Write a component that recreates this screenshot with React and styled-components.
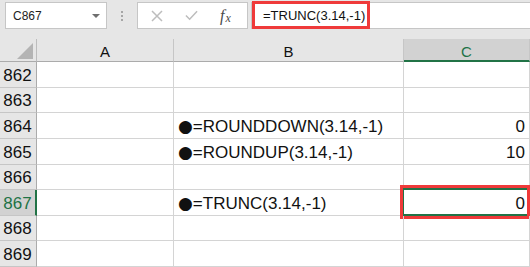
import React from 'react';
import styled, { createGlobalStyle } from 'styled-components';

const Global = createGlobalStyle`
  html, body { margin: 0; padding: 0; background: #fff; }
  body { font-family: "Liberation Sans", "DejaVu Sans", Arial, sans-serif; }
`;

const GREEN = '#217346';
const RED = '#ef3a3a';

const Page = styled.div`
  width: 530px;
  height: 267px;
  overflow: hidden;
  background: #fff;
`;

const Toolbar = styled.div`
  height: 39px;
  box-sizing: border-box;
  padding-top: 2px;
  background: #e6e6e6;
  display: flex;
  align-items: flex-start;
`;

const NameBox = styled.div`
  margin-left: 5px;
  width: 102px;
  height: 27px;
  box-sizing: border-box;
  background: #fff;
  border: 1px solid #c6c6c6;
  display: flex;
  align-items: center;
  justify-content: space-between;
  padding: 0 6px 0 7px;
  font-size: 12px;
  color: #222;
`;

const Caret = styled.span`
  width: 0;
  height: 0;
  border-left: 4px solid transparent;
  border-right: 4px solid transparent;
  border-top: 4px solid #6f6f6f;
`;

const Grip = styled.div`
  width: 30px;
  height: 27px;
  display: flex;
  flex-direction: column;
  align-items: center;
  justify-content: center;
  gap: 2px;
  & > span {
    width: 2px;
    height: 2px;
    background: #a6a6a6;
  }
`;

const ButtonsBox = styled.div`
  width: 111px;
  height: 27px;
  box-sizing: border-box;
  background: #fff;
  border: 1px solid #c6c6c6;
  display: flex;
  align-items: center;
  padding-left: 12px;
  gap: 22px;
`;

const IconBtn = styled.span`
  display: flex;
  align-items: center;
  justify-content: center;
  width: 13px;
  height: 13px;
`;

const Fx = styled.span`
  font-family: "Liberation Serif", "DejaVu Serif", serif;
  font-style: italic;
  font-size: 16px;
  color: #4a4a4a;
  display: flex;
  align-items: baseline;
  & > sub {
    font-size: 12px;
    vertical-align: baseline;
    position: relative;
    top: 1px;
    margin-left: 1px;
  }
`;

const FormulaBox = styled.div`
  position: relative;
  flex: 1;
  margin-left: 3px;
  height: 27px;
  box-sizing: border-box;
  background: #fff;
  border: 1px solid #c6c6c6;
  border-right: none;
  display: flex;
  align-items: center;
  padding-left: 11px;
  font-size: 13px;
  color: #111;
`;

const Highlight = styled.div`
  position: absolute;
  box-sizing: border-box;
  border: 3px solid ${RED};
  pointer-events: none;
`;

const SheetRow = styled.div`
  display: grid;
  grid-template-columns: 37px 137px 230px 1fr;
  height: ${p => p.$h}px;
`;

const Corner = styled.div`
  background: #e6e6e6;
  border-right: 1px solid #bdbdbd;
  border-bottom: 1px solid #ababab;
  display: flex;
  align-items: flex-end;
  justify-content: flex-end;
  padding: 0 3px 2px 0;
`;

const ColHead = styled.div`
  background: ${p => (p.$active ? '#d2d2d2' : '#e6e6e6')};
  border-right: 1px solid #c6c6c6;
  border-bottom: ${p => (p.$active ? `2px solid ${GREEN}` : '1px solid #ababab')};
  color: ${p => (p.$active ? GREEN : '#111')};
  font-size: 15px;
  display: flex;
  align-items: center;
  justify-content: center;
  padding-top: ${p => (p.$active ? 3 : 2)}px;
`;

const RowHead = styled.div`
  background: ${p => (p.$active ? '#d2d2d2' : '#e6e6e6')};
  border-right: ${p => (p.$active ? `2px solid ${GREEN}` : '1px solid #ababab')};
  border-bottom: 1px solid #c6c6c6;
  color: ${p => (p.$active ? GREEN : '#111')};
  font-size: 17px;
  line-height: 17px;
  display: flex;
  align-items: flex-end;
  justify-content: center;
  padding: 0 ${p => (p.$active ? 0 : 1)}px 3px 0;
`;

const Cell = styled.div`
  position: relative;
  border-right: 1px solid #d4d4d4;
  border-bottom: 1px solid #d4d4d4;
  font-size: 17px;
  line-height: 17px;
  color: #111;
  display: flex;
  align-items: flex-end;
  justify-content: ${p => (p.$num ? 'flex-end' : 'flex-start')};
  padding: 0 ${p => (p.$num ? 4 : 0)}px 3px ${p => (p.$num ? 0 : 4)}px;
  white-space: nowrap;
`;

const Bullet = styled.span`
  font-family: "DejaVu Sans", sans-serif;
  font-size: 17px;
`;

const Selection = styled.div`
  position: absolute;
  left: -2px;
  top: -2px;
  right: -2px;
  bottom: -1px;
  border: 2px solid ${GREEN};
  pointer-events: none;
`;

const rows = [
  { n: 862, h: 26 },
  { n: 863, h: 25 },
  { n: 864, h: 26, b: '=ROUNDDOWN(3.14,-1)', c: '0' },
  { n: 865, h: 26, b: '=ROUNDUP(3.14,-1)', c: '10' },
  { n: 866, h: 25 },
  { n: 867, h: 26, b: '=TRUNC(3.14,-1)', c: '0', sel: true },
  { n: 868, h: 25 },
  { n: 869, h: 26 },
];

export default function App() {
  return (
    <Page>
      <Global />
      <Toolbar>
        <NameBox>
          <span>C867</span>
          <Caret />
        </NameBox>
        <Grip>
          <span />
          <span />
          <span />
        </Grip>
        <ButtonsBox>
          <IconBtn>
            <svg width="12" height="12" viewBox="0 0 12 12">
              <path d="M1 1 L11 11 M11 1 L1 11" stroke="#bdbdbd" strokeWidth="1.5" fill="none" />
            </svg>
          </IconBtn>
          <IconBtn>
            <svg width="14" height="11" viewBox="0 0 14 11">
              <path d="M1 5.5 L5 9.5 L13 1" stroke="#bdbdbd" strokeWidth="1.6" fill="none" />
            </svg>
          </IconBtn>
          <Fx>
            f<sub>x</sub>
          </Fx>
        </ButtonsBox>
        <FormulaBox>
          =TRUNC(3.14,-1)
          <Highlight style={{ left: 0, top: -2, width: 118, height: 28 }} />
        </FormulaBox>
      </Toolbar>

      <SheetRow $h={23}>
        <Corner>
          <svg width="16" height="16" viewBox="0 0 16 16">
            <polygon points="16,0 16,16 0,16" fill="#b4b4b4" />
          </svg>
        </Corner>
        <ColHead>A</ColHead>
        <ColHead>B</ColHead>
        <ColHead $active>C</ColHead>
      </SheetRow>

      {rows.map(r => (
        <SheetRow key={r.n} $h={r.h}>
          <RowHead $active={r.sel}>{r.n}</RowHead>
          <Cell />
          <Cell>
            {r.b && (
              <>
                <Bullet>●</Bullet>
                {r.b}
              </>
            )}
          </Cell>
          <Cell $num>
            {r.c}
            {r.sel && (
              <>
                <Selection />
                <Highlight style={{ left: -4, top: -5, width: 130, height: 34 }} />
              </>
            )}
          </Cell>
        </SheetRow>
      ))}
    </Page>
  );
}
